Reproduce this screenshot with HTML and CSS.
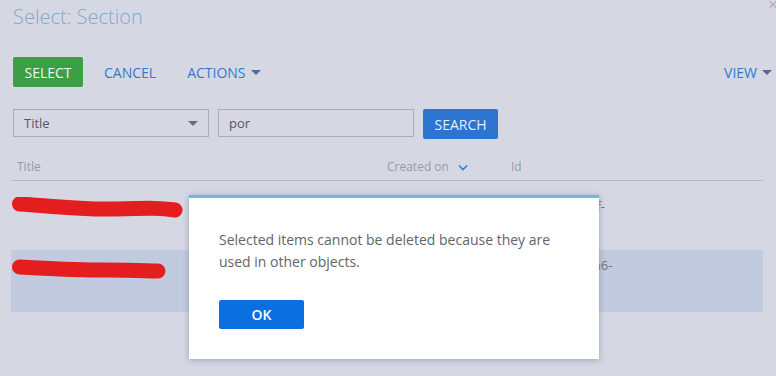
FILE: index.html
```html
<!DOCTYPE html>
<html>
<head>
<meta charset="utf-8">
<link rel="stylesheet" href="styles.css">
</head>
<body>
<div class="page">
  <h1 class="title">Select: Section</h1>
  <div class="toolbar">
    <button class="btn btn-green">SELECT</button>
    <button class="link">CANCEL</button>
    <button class="link">ACTIONS <span class="caret"></span></button>
    <span class="spacer"></span>
    <button class="link view">VIEW <span class="caret"></span></button>
  </div>
  <div class="search">
    <div class="field select">Title <span class="caret grey"></span></div>
    <div class="field input">por</div>
    <button class="btn btn-blue">SEARCH</button>
  </div>
  <div class="grid">
    <div class="row head">
      <div class="cell">Title</div>
      <div class="cell">Created on <svg class="chev" width="10" height="7" viewBox="0 0 10 7"><path d="M1 1.5 L5 5.5 L9 1.5" fill="none" stroke="#3b7dd0" stroke-width="1.6"/></svg></div>
      <div class="cell">Id</div>
    </div>
    <div class="row item">
      <div class="cell"><svg class="scribble" width="180" height="24" viewBox="0 0 180 24"><path d="M8.5 7 C 40 9, 70 13, 105 12 S 150 11, 164 13" fill="none" stroke="#e41d1f" stroke-width="15" stroke-linecap="round"/></svg></div>
      <div class="cell date"></div>
      <div class="cell id">1a2b3c4d-5e6f-</div>
    </div>
    <div class="row item selected">
      <div class="cell"><svg class="scribble" width="180" height="24" viewBox="0 0 180 24"><path d="M8.5 8 C 30 9, 60 11, 95 11 S 135 12, 147 12" fill="none" stroke="#e41d1f" stroke-width="15" stroke-linecap="round"/></svg></div>
      <div class="cell date"></div>
      <div class="cell id">3b4c5d6e-7f8a6-</div>
    </div>
  </div>
</div>
<span class="close">×</span>
<div class="dialog">
  <p class="msg">Selected items cannot be deleted because they are used in other objects.</p>
  <button class="btn btn-ok">OK</button>
</div>
</body>
</html>
```
FILE: styles.css
```css
* { box-sizing: border-box; }
html, body { margin: 0; padding: 0; }
body {
  width: 776px;
  height: 376px;
  overflow: hidden;
  background: #d5d8e3;
  font-family: "Open Sans", "Noto Sans", sans-serif;
  position: relative;
}
.page { padding: 0 4px 0 13px; }
.title {
  margin: 0;
  padding-top: 3px;
  font-weight: 300;
  font-size: 20px;
  line-height: 27px;
  color: #7eaad2;
}
.toolbar {
  display: flex;
  align-items: center;
  margin-top: 27px;
  height: 30px;
}
button { font-family: inherit; border: 0; cursor: pointer; }
.btn {
  height: 30px;
  font-size: 14px;
  border-radius: 2px;
  padding: 0 11px;
}
.btn-green { background: #3c9f46; color: #eef7ee; width: 70px; }
.link {
  background: none;
  color: #2f7ad0;
  font-size: 14px;
  padding: 0;
  display: flex;
  align-items: center;
}
.toolbar .link:nth-child(2) { margin-left: 21px; }
.toolbar .link:nth-child(3) { margin-left: 31px; }
.spacer { flex: 1; }
.caret {
  display: inline-block;
  width: 0; height: 0;
  border-left: 5px solid transparent;
  border-right: 5px solid transparent;
  border-top: 5px solid #4c6c9c;
  margin-left: 5px;
  margin-top: 1px;
}
.caret.grey { border-top-color: #6a6c74; margin-left: auto; }
.search {
  display: flex;
  align-items: flex-start;
  margin-top: 22px;
  height: 30px;
}
.field {
  height: 28px;
  border: 1px solid #a9adb9;
  font-size: 13px;
  color: #55575e;
  display: flex;
  align-items: center;
  padding: 0 10px;
}
.select { width: 196px; }
.input { width: 196px; margin-left: 9px; }
.btn-blue {
  margin-left: 9px;
  width: 75px;
  background: #2b74d0;
  color: #e4eefb;
  padding: 0;
}
.grid {
  margin: 16px 0 0 -2px;
  width: 752px;
}
.row {
  display: grid;
  grid-template-columns: 370px 124px 1fr;
}
.cell { padding-left: 6px; }
.head {
  height: 26px;
  border-bottom: 1px solid #b8bbc6;
  font-size: 12px;
  color: #989aa3;
  line-height: 24px;
}
.chev { margin-left: 6px; vertical-align: 0; }
.item {
  height: 62px;
  padding-top: 6px;
  font-size: 13px;
  color: #707279;
  line-height: 18px;
}
.head + .item { margin-top: 7px; }
.selected { background: #c2cadf; }
.selected .id { padding-top: 0; }
.scribble { display: block; margin-left: -6px; margin-top: 3px; }
.id { padding-top: 3px; white-space: nowrap; }
.close {
  position: absolute;
  right: -2px;
  top: -8px;
  font-size: 18px;
  color: #9a9ca6;
  font-weight: 300;
}
.dialog {
  position: absolute;
  left: 189px;
  top: 195px;
  width: 410px;
  height: 164px;
  background: #fff;
  border-top: 3px solid #6cb9e2;
  box-shadow: 0 1px 6px rgba(60, 64, 80, 0.35);
  padding: 31px 30px 0 30px;
}
.msg {
  margin: 0;
  font-size: 14px;
  line-height: 22px;
  color: #62646a;
  width: 350px;
}
.btn-ok {
  margin-top: 27px;
  width: 85px;
  height: 29px;
  background: #0c6fe0;
  color: #fff;
  font-weight: 600;
  font-size: 14px;
  padding: 0;
}
```
